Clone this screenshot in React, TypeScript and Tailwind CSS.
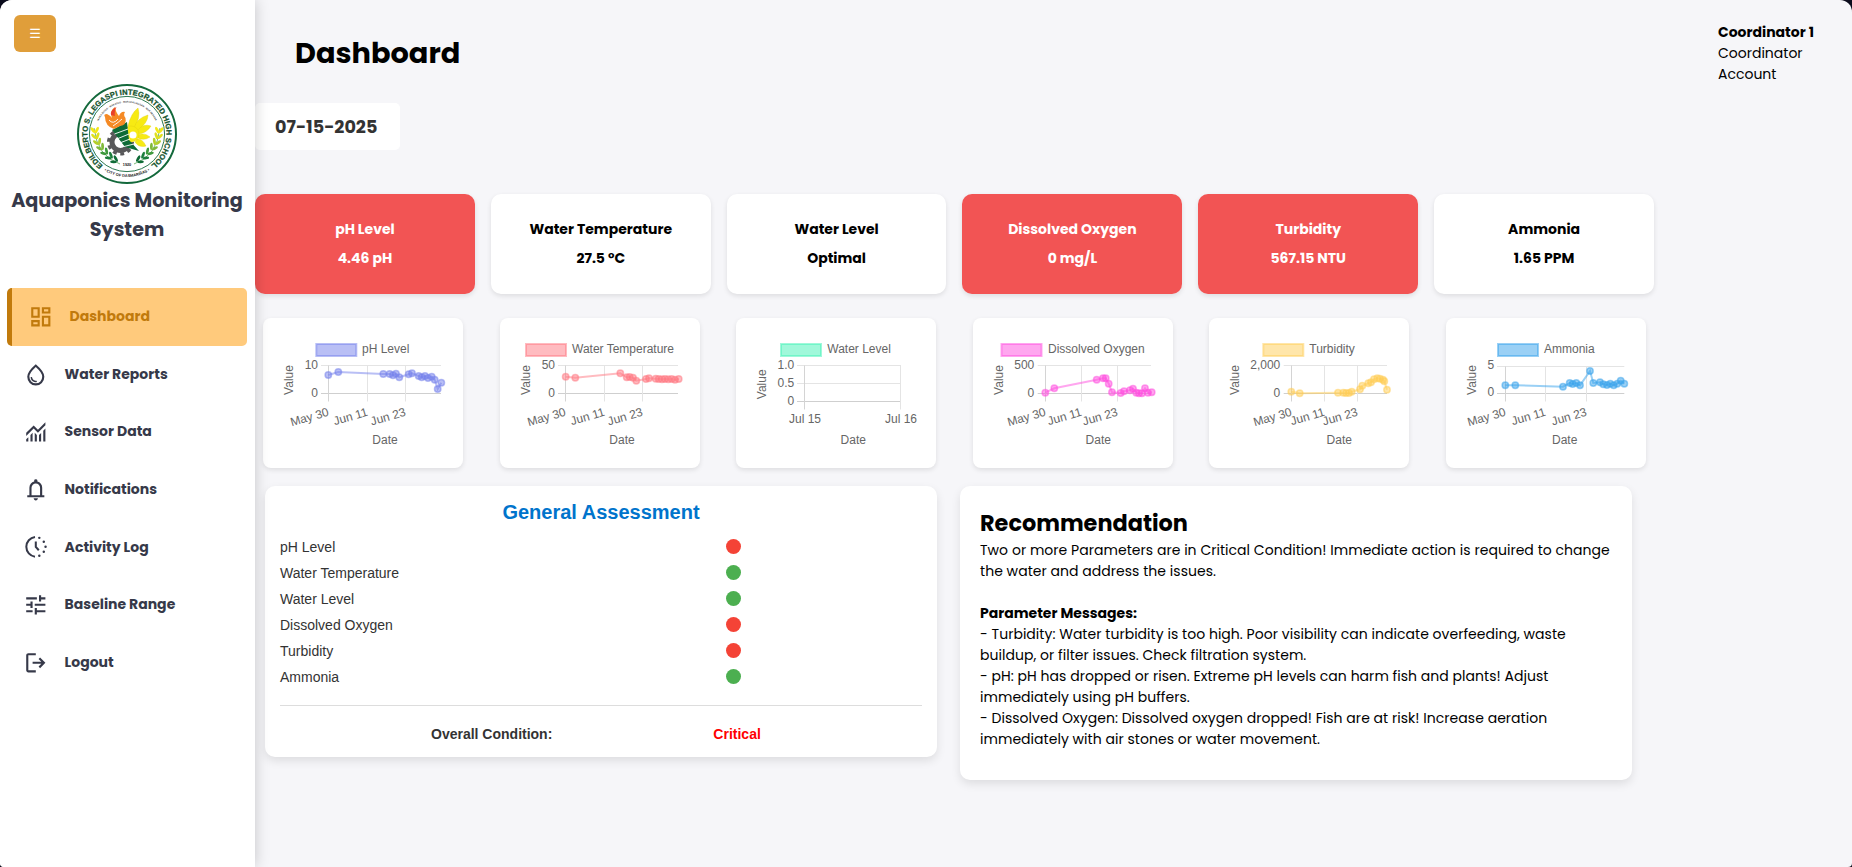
import type { ReactNode } from "react";

const SYMBOLS = {
  dashboard:
    "M520-600v-240h320v240H520ZM120-440v-400h320v400H120Zm400 320v-400h320v400H520Zm-400 0v-240h320v240H120Zm80-400h160v-240H200v240Zm400 320h160v-240H600v240Zm0-480h160v-80H600v80ZM200-200h160v-80H200v80Z",
  water:
    "M491-200q12-1 20.5-9.5T520-230q0-14-9-22.5t-23-7.5q-41 3-87-22.5T343-375q-2-11-10.5-18t-19.5-7q-14 0-23 10.5t-6 24.5q17 91 80 130t127 35ZM480-80q-137 0-228.5-94T160-408q0-100 79.5-217.5T480-880q161 137 240.5 254.5T800-408q0 140-91.5 234T480-80Zm0-80q104 0 172-70.5T720-408q0-73-60.5-165T480-774Q361-665 300.5-573T240-408q0 107 68 177.5T480-160Z",
  sensor:
    "M120-120v-80l80-80v160h-80Zm160 0v-240l80-80v320h-80Zm160 0v-320l80 81v239h-80Zm160 0v-239l80-80v319h-80Zm160 0v-400l80-80v480h-80ZM120-327v-113l280-280 160 160 280-280v113L560-447 400-607 120-327Z",
  bell: "M160-200v-80h80v-280q0-83 50-147.5T420-792v-28q0-25 17.5-42.5T480-880q25 0 42.5 17.5T540-820v28q80 20 130 84.5T720-560v280h80v80H160Zm320-300Zm0 420q-33 0-56.5-23.5T400-160h160q0 33-23.5 56.5T480-80ZM320-280h320v-280q0-66-47-113t-113-47q-66 0-113 47t-47 113v280Z",
  tune: "M440-120v-240h80v80h320v80H520v80h-80Zm-320-80v-80h240v80H120Zm160-160v-80H120v-80h160v-80h80v240h-80Zm160-80v-80h400v80H440Zm160-160v-240h80v80h160v80H680v80h-80Zm-480-80v-80h400v80H120Z",
  logout:
    "M200-120q-33 0-56.5-23.5T120-200v-560q0-33 23.5-56.5T200-840h280v80H200v560h280v80H200Zm440-160-55-58 102-102H360v-80h327L585-622l55-58 200 200-200 200Z",
};

function Symbol({ d }: { d: string }) {
  return (
    <svg viewBox="0 -960 960 960" className="size-[25.6px] shrink-0 fill-current">
      <path d={d} />
    </svg>
  );
}

function ActivityIcon() {
  return (
    <svg viewBox="0 -960 960 960" className="size-[25.6px] shrink-0">
      <path d="M450-850A373 373 0 0 0 450-110" fill="none" stroke="currentColor" strokeWidth="76" />
      <path d="M480-680v200l112 128" fill="none" stroke="currentColor" strokeWidth="76" />
      <g fill="currentColor">
        <circle cx="612" cy="-815" r="46" />
        <circle cx="780" cy="-668" r="46" />
        <circle cx="846" cy="-480" r="46" />
        <circle cx="780" cy="-292" r="46" />
        <circle cx="612" cy="-145" r="46" />
      </g>
    </svg>
  );
}

type NavItem = { label: string; icon: ReactNode; active?: boolean };

const NAV: NavItem[] = [
  { label: "Dashboard", icon: <Symbol d={SYMBOLS.dashboard} />, active: true },
  { label: "Water Reports", icon: <Symbol d={SYMBOLS.water} /> },
  { label: "Sensor Data", icon: <Symbol d={SYMBOLS.sensor} /> },
  { label: "Notifications", icon: <Symbol d={SYMBOLS.bell} /> },
  { label: "Activity Log", icon: <ActivityIcon /> },
  { label: "Baseline Range", icon: <Symbol d={SYMBOLS.tune} /> },
  { label: "Logout", icon: <Symbol d={SYMBOLS.logout} /> },
];

function Laurel() {
  const leaves = [
    [17.5, 45, -4, "#f2e818"],
    [18.2, 51, -12, "#dfe01c"],
    [20, 57, -22, "#b5cf2a"],
    [23, 62.5, -32, "#7fb93a"],
    [27, 67.5, -42, "#3f9a3f"],
    [31.5, 72, -50, "#1c7d3c"],
    [36.5, 75.8, -58, "#0f6b37"],
  ] as const;
  return (
    <g>
      <path d="M17 44Q20 72 43 80" fill="none" stroke="#3f9a3f" strokeWidth="0.7" />
      {leaves.map(([x, y, r, c]) => (
        <g key={y} transform={`translate(${x} ${y}) rotate(${r})`} fill={c}>
          <ellipse cx="-2" cy="0" rx="1.4" ry="3.3" transform="rotate(-30)" />
          <ellipse cx="2.6" cy="0" rx="1.4" ry="3.6" transform="rotate(30)" />
        </g>
      ))}
    </g>
  );
}

function SchoolSeal() {
  return (
    <svg
      viewBox="0 0 100 100"
      className="-ml-px size-[100px]"
      fontFamily="Liberation Sans, sans-serif"
      fontWeight="bold"
      textAnchor="middle"
    >
      <defs>
        <path id="seal-top" d="M25.7 81.1A39.4 39.4 0 1 1 74.3 81.1" />
        <path id="seal-bottom" d="M14 73.5A43 43 0 0 0 86 73.5" />
        <path id="seal-motto" d="M20 41A31.3 31.3 0 0 1 80 41" />
      </defs>
      <circle cx="50" cy="50" r="49" fill="#fff" stroke="#14693c" strokeWidth="2" />
      <circle cx="50" cy="50" r="37.6" fill="none" stroke="#14693c" strokeWidth="0.9" />
      <text fontSize="7.6" fill="#14532d" stroke="#14532d" strokeWidth="0.25">
        <textPath href="#seal-top" startOffset="50%">
          EDILBERTO S. LEGASPI INTEGRATED HIGH SCHOOL
        </textPath>
      </text>
      <text fontSize="3.9" fill="#222">
        <textPath href="#seal-bottom" startOffset="50%">
          • CITY OF DASMARIÑAS •
        </textPath>
      </text>
      <text fontSize="2.4" fill="#444">
        <textPath href="#seal-motto" startOffset="50%">
          MAKA-DIYOS · MAKATAO · MAKAKALIKASAN · MAKABANSA
        </textPath>
      </text>
      <Laurel />
      <g transform="translate(100 0) scale(-1 1)">
        <Laurel />
      </g>
      <circle cx="43.5" cy="58" r="8.5" fill="none" stroke="#58585a" strokeWidth="5" />
      <circle cx="43.5" cy="58" r="12" fill="none" stroke="#58585a" strokeWidth="3" strokeDasharray="3.9 3.64" />
      <g fill="#f7ea13" stroke="#e0cf10" strokeWidth="0.4">
        <path d="M51 42Q54 29 61 24Q64 33 57 45Z" />
        <path d="M57 44Q60 34 71 31Q71 39 60 47Z" />
        <path d="M60 47Q66 39 74 42Q70 49 61 50Z" />
        <path d="M61 51Q67 48 73 53Q67 57 61 54Z" />
        <path d="M60 55Q65 54 69 62Q62 64 58 58Z" />
        <circle cx="54" cy="50" r="8" />
      </g>
      <circle cx="56" cy="51" r="3.6" fill="#fff" />
      <path d="M35 46L50 38L52 56L62 67L48 63Z" fill="#0f6b37" />
      <g stroke="#fff" strokeWidth="0.9">
        <path d="M37.5 50L51 45" />
        <path d="M41 54.5L52 50" />
        <path d="M44 58.5L53 55" />
        <path d="M47 62.5L57 60" />
      </g>
      <path
        d="M28 33Q26 30 30 30Q34 32 35 34Q32 27 38 23Q39 29 42 32Q44 27 48 28Q46 31 48.5 34Q50 41 43 42L37 45Q28 42 28 33Z"
        fill="#f58a25"
      />
      <path d="M34 31Q33 26 39.5 23Q37 27 38 32Z" fill="#e8402a" />
      <path d="M32 36Q36 41 41 35M36 42Q42 38 45 35" fill="none" stroke="#fff" strokeWidth="0.9" />
      <text x="50" y="82" fontSize="3.8" fill="#111">
        1920
      </text>
    </svg>
  );
}

function Sidebar() {
  return (
    <aside className="z-10 flex w-[255px] shrink-0 flex-col bg-white text-[#363949] shadow-[0_0_14px_rgba(0,0,0,0.2)]">
      <button className="mt-[15px] ml-[14px] flex h-[37px] w-[42px] items-center justify-center rounded-md bg-[#e09e3a] font-['DejaVu_Sans'] text-[13px] text-white">
        ☰
      </button>
      <div className="mt-8 flex flex-col items-center">
        <SchoolSeal />
        <h2 className="mt-[3px] -ml-px text-center text-[19.2px] leading-[28.8px] font-bold">
          Aquaponics Monitoring
          <br />
          System
        </h2>
      </div>
      <nav className="mt-[43.4px] flex flex-col pr-2 pl-[7px]">
        {NAV.map((item) => (
          <a
            key={item.label}
            className={
              item.active
                ? "flex h-[57.6px] items-center gap-4 rounded-[5px] border-l-5 border-[#c17a0c] bg-[#ffca7c] pl-4 text-[#c17a0c]"
                : "flex h-[57.6px] items-center gap-4 pl-4"
            }
          >
            {item.icon}
            <span className="-mt-px text-sm font-bold">{item.label}</span>
          </a>
        ))}
      </nav>
    </aside>
  );
}

const READINGS = [
  { label: "pH Level", value: "4.46 pH", alert: true },
  { label: "Water Temperature", value: "27.5 °C", alert: false },
  { label: "Water Level", value: "Optimal", alert: false },
  { label: "Dissolved Oxygen", value: "0 mg/L", alert: true },
  { label: "Turbidity", value: "567.15 NTU", alert: true },
  { label: "Ammonia", value: "1.65 PPM", alert: false },
];

type Chart = {
  label: string;
  color: string;
  box: number;
  textX: number;
  top: number;
  bottom: number;
  ticks: [string, number][];
  tickRight: number;
  gridLeft: number;
  gridRight: number;
  cols: number[];
  dates: string[];
  flat?: boolean;
  dateX: number;
  valueY: number;
  points: [number, number][];
};

const MONTHS = ["May 30", "Jun 11", "Jun 23"];

const CHARTS: Chart[] = [
  {
    label: "pH Level", color: "#7380ec", box: 53.3, textX: 99, top: 47.5, bottom: 75.5,
    ticks: [["10", 47.5], ["0", 75.5]], tickRight: 55, gridLeft: 58, gridRight: 178,
    cols: [65.5, 104.5, 142.5], dates: MONTHS, dateX: 122, valueY: 62,
    points: [[65.3, 57], [75.3, 54], [120.3, 56], [126.7, 56], [130, 57.3], [133, 55.7], [136.3, 59.3], [145.7, 56.3], [149, 55.3], [155.7, 58], [158.7, 59.3], [162, 58], [165, 60], [168.7, 58.7], [171.7, 61.7], [174.7, 71], [178.3, 64.7]],
  },
  {
    label: "Water Temperature", color: "#ff7782", box: 26, textX: 72, top: 47.5, bottom: 75.5,
    ticks: [["50", 47.5], ["0", 75.5]], tickRight: 55, gridLeft: 58, gridRight: 178,
    cols: [65.5, 104.5, 142.5], dates: MONTHS, dateX: 122, valueY: 62,
    points: [[65.7, 58.7], [75.3, 59.7], [120.3, 55.3], [126.7, 59.3], [129.7, 59], [133, 59.7], [136.3, 62.7], [146, 61], [149, 60.3], [155.7, 60.7], [158.7, 61], [162, 61.3], [165, 61], [168.3, 61.3], [171.7, 61], [175, 61.7], [178.7, 61]],
  },
  {
    label: "Water Level", color: "#41f1b6", box: 45, textX: 91.3, top: 47.5, bottom: 83.5,
    ticks: [["1.0", 47.5], ["0.5", 65.5], ["0", 83.5]], tickRight: 58.3, gridLeft: 61, gridRight: 165,
    cols: [68.5, 164.5], dates: ["Jul 15", "Jul 16"], flat: true, dateX: 117.3, valueY: 66.3, points: [],
  },
  {
    label: "Dissolved Oxygen", color: "#ff4edf", box: 28.5, textX: 75, top: 47.5, bottom: 75.5,
    ticks: [["500", 47.5], ["0", 75.5]], tickRight: 61.3, gridLeft: 64.7, gridRight: 178,
    cols: [72.5, 108.5, 144.5], dates: MONTHS, dateX: 125.3, valueY: 62,
    points: [[72.3, 74.7], [81.3, 70.3], [123.7, 61.7], [130, 60.3], [132.7, 60.3], [135.7, 65.7], [139, 74.3], [147.7, 75], [151, 73.3], [157, 72.3], [160, 70.7], [163.3, 74.7], [166, 75.3], [169, 75.3], [172, 70.3], [175, 74.7], [178.7, 74.3]],
  },
  {
    label: "Turbidity", color: "#ffcd56", box: 54.3, textX: 100.3, top: 47.5, bottom: 75.5,
    ticks: [["2,000", 47.5], ["0", 75.5]], tickRight: 71.3, gridLeft: 74.7, gridRight: 178,
    cols: [82.5, 115.5, 148.5], dates: MONTHS, dateX: 130.3, valueY: 62,
    points: [[82.3, 73.7], [90.7, 75.3], [129, 74.7], [134.3, 74.7], [137, 75], [140, 75], [142.7, 73.7], [151, 71.3], [153.3, 67.7], [159.3, 65.3], [162, 64.3], [165, 61.3], [168.3, 60.3], [171, 60.7], [174, 61.7], [175.3, 63.3], [178, 71.7]],
  },
  {
    label: "Ammonia", color: "#36a2eb", box: 52, textX: 98, top: 48.5, bottom: 75.5,
    ticks: [["5", 47], ["0", 74.5]], tickRight: 48.3, gridLeft: 51, gridRight: 178.3,
    cols: [59.5, 99.5, 140.5], dates: MONTHS, dateX: 118.7, valueY: 62,
    points: [[59.3, 67.3], [69.3, 67.3], [117, 68.7], [123.7, 65], [126.7, 66], [130.3, 65], [134, 67.3], [144, 53], [147.3, 65], [154, 64.3], [157.3, 66.3], [161, 67], [164.3, 65.7], [167.7, 67.3], [171.3, 65.7], [174.7, 62.7], [178.3, 65.7]],
  },
];

function TrendChart({ c }: { c: Chart }) {
  return (
    <div className="h-[150px] w-[200px] rounded-[8px] bg-white shadow-[0_2px_5px_rgba(0,0,0,0.1)]">
      <svg
        viewBox="0 0 200 150"
        className="h-[150px] w-[200px]"
        fontFamily="Liberation Sans, Arial, sans-serif"
        fontSize="12"
        fill="#666"
      >
        <rect
          x={c.box}
          y="26"
          width="40"
          height="12"
          fill={c.color}
          fillOpacity="0.5"
          stroke={c.color}
          strokeOpacity="0.5"
          strokeWidth="2"
        />
        <text x={c.textX} y="35.4">{c.label}</text>
        <text x="26" y={c.valueY} textAnchor="middle" transform={`rotate(-90 26 ${c.valueY})`} dy="4.3">
          Value
        </text>
        {c.ticks.map(([t, y]) => (
          <g key={t}>
            <path
              d={`M${c.gridLeft} ${t === "0" ? c.bottom : Math.max(y, c.top)}H${c.gridRight}`}
              stroke={t === "0" ? "#cfcfcf" : "#e4e4e4"}
            />
            <text x={c.tickRight} y={y + 3.7} textAnchor="end">{t}</text>
          </g>
        ))}
        {c.cols.map((x, i) => (
          <g key={x}>
            <path d={`M${x} ${c.top}V${c.bottom + 8}`} stroke={i === 0 ? "#d4d4d4" : "#e4e4e4"} />
            {c.flat ? (
              <text x={x + 0.5} y="105.4" textAnchor="middle">{c.dates[i]}</text>
            ) : (
              <text x={x + 1} y="97.5" textAnchor="end" transform={`rotate(-16 ${x + 1} 97.5)`}>
                {c.dates[i]}
              </text>
            )}
          </g>
        ))}
        <text x={c.dateX} y="126.4" textAnchor="middle">Date</text>
        <polyline
          points={c.points.map((p) => p.join(",")).join(" ")}
          fill="none"
          stroke={c.color}
          strokeOpacity="0.5"
          strokeWidth="2"
        />
        {c.points.map(([x, y], i) => (
          <circle
            key={i}
            cx={x}
            cy={y}
            r="3.2"
            fill={c.color}
            fillOpacity="0.5"
            stroke={c.color}
            strokeOpacity="0.5"
            strokeWidth="1.5"
          />
        ))}
      </svg>
    </div>
  );
}

const ASSESSMENT = [
  ["pH Level", false],
  ["Water Temperature", true],
  ["Water Level", true],
  ["Dissolved Oxygen", false],
  ["Turbidity", false],
  ["Ammonia", true],
] as const;

function Assessment() {
  return (
    <section className="flex h-[271px] w-[672px] flex-col rounded-[10px] bg-white px-[15px] pt-3.5 font-['Liberation_Sans',Arial,sans-serif] text-sm text-[#333] shadow-[0_4px_10px_rgba(0,0,0,0.1)]">
      <h2 className="mb-2.5 text-center text-xl leading-6 font-bold text-[#0074cc]">General Assessment</h2>
      {ASSESSMENT.map(([name, ok]) => (
        <div key={name} className="grid h-[26px] grid-cols-[446px_1fr] items-center">
          <span>{name}</span>
          <span
            className={
              ok
                ? "-mt-px size-[15px] rounded-full bg-[#4caf50]"
                : "-mt-px size-[15px] rounded-full bg-[#f44336]"
            }
          />
        </div>
      ))}
      <hr className="mt-[15px] border-[#ddd]" />
      <div className="mt-[18px] flex gap-[161px] pl-[151px] leading-5 font-bold">
        <span>Overall Condition:</span>
        <span className="text-[#f00]">Critical</span>
      </div>
    </section>
  );
}

function Recommendation() {
  return (
    <section className="h-[294px] w-[672px] rounded-[10px] bg-white p-5 text-sm leading-[21px] tracking-[0.035px] text-black shadow-[0_4px_10px_rgba(0,0,0,0.1)]">
      <h2 className="pt-px text-[22.4px] leading-[32.6px] font-bold tracking-normal">Recommendation</h2>
      <p>
        Two or more Parameters are in Critical Condition! Immediate action is required to change the water and address
        the issues.
      </p>
      <p className="mt-[21px] font-bold tracking-normal">Parameter Messages:</p>
      <p>
        - Turbidity: Water turbidity is too high. Poor visibility can indicate overfeeding, waste buildup, or filter
        issues. Check filtration system.
      </p>
      <p>
        - pH: pH has dropped or risen. Extreme pH levels can harm fish and plants! Adjust immediately using pH buffers.
      </p>
      <p>
        - Dissolved Oxygen: Dissolved oxygen dropped! Fish are at risk! Increase aeration immediately with air stones or
        water movement.
      </p>
    </section>
  );
}

export default function App() {
  return (
    <div className="bg-[#0b0c1c]">
      <div className="flex h-[867px] w-[1852px] overflow-hidden rounded-t-[12px] rounded-b-[4px] bg-[#f6f6f9] font-['Poppins','Inter',sans-serif] text-black">
        <Sidebar />
        <main className="flex flex-1 flex-col">
          <header className="flex h-[103px] justify-between">
            <h1 className="mt-8 ml-[40px] text-[28.8px] leading-[43.2px] font-bold">Dashboard</h1>
            <div className="mt-[21.5px] w-[134px] text-sm leading-[21px]">
              <p className="font-bold">Coordinator 1</p>
              <p>Coordinator</p>
              <p>Account</p>
            </div>
          </header>
          <div className="flex h-[47px] w-[145px] items-center rounded-[5px] bg-white pt-0.5 pl-5 text-[17.6px] font-bold text-[#333]">
            07-15-2025
          </div>
          <div className="mt-11 grid w-[1399px] grid-cols-6 gap-4">
            {READINGS.map((r) => (
              <div
                key={r.label}
                className={
                  r.alert
                    ? "flex h-[100px] flex-col items-center justify-center gap-2 rounded-[10px] bg-[#f25454] text-sm leading-[21px] font-bold text-white shadow-[0_2px_5px_rgba(0,0,0,0.1)]"
                    : "flex h-[100px] flex-col items-center justify-center gap-2 rounded-[10px] bg-white text-sm leading-[21px] font-bold shadow-[0_2px_5px_rgba(0,0,0,0.1)]"
                }
              >
                <span>{r.label}</span>
                <span>{r.value}</span>
              </div>
            ))}
          </div>
          <div className="mt-6 ml-2 flex w-[1383px] justify-between">
            {CHARTS.map((c) => (
              <TrendChart key={c.label} c={c} />
            ))}
          </div>
          <div className="mt-[18px] ml-2.5 flex items-start gap-[23px]">
            <Assessment />
            <Recommendation />
          </div>
        </main>
      </div>
    </div>
  );
}
